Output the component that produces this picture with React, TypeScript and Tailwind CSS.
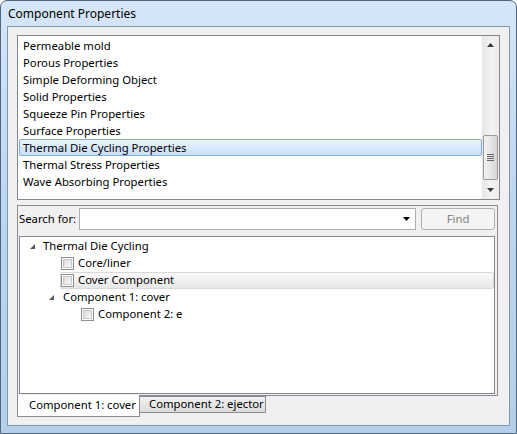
import React from "react";

function Checkbox() {
  return (
    <div className="w-[13px] h-[13px] border border-[#8e8f8f] bg-white p-[1px] shrink-0">
      <div className="w-full h-full border border-[#c6c8cc] bg-gradient-to-br from-[#dadde2] to-[#f7f7f7]" />
    </div>
  );
}

function TreeArrow() {
  return (
    <svg width="7" height="7" viewBox="0 0 7 7" className="shrink-0">
      <polygon points="6,1 6,6 1,6" fill="#575757" />
    </svg>
  );
}

export default function App() {
  const items = [
    "Permeable mold",
    "Porous Properties",
    "Simple Deforming Object",
    "Solid Properties",
    "Squeeze Pin Properties",
    "Surface Properties",
    "Thermal Die Cycling Properties",
    "Thermal Stress Properties",
    "Wave Absorbing Properties",
  ];
  return (
    <div className="w-[517px] h-[434px] font-['Noto_Sans',sans-serif] text-[11.3px] text-black bg-white">
      <div className="w-full h-full flex flex-col rounded-t-[7px] border border-[#4f6680] bg-gradient-to-b from-[#d5e6f7] via-[#bdd5ef] to-[#b5cfea] overflow-hidden">
        <div className="h-[25px] flex items-center pl-[7px] shrink-0 text-[12px]">Component Properties</div>
        <div className="flex-1 mx-[6px] mb-[7px] border border-[#8096ae] bg-[#f0f0f0] flex flex-col px-[9px] pt-[8px]">
          {/* top list */}
          <div className="h-[165px] border border-[#828790] bg-white flex shrink-0">
            <div className="flex-1 pt-[1px] flex flex-col">
              {items.map((it) => {
                const sel = it === "Thermal Die Cycling Properties";
                return (
                  <div
                    key={it}
                    className={
                      sel
                        ? "h-[17px] leading-[15px] ml-[1px] pl-[3px] border border-[#84acdd] rounded-[2px] bg-gradient-to-b from-[#eaf3fd] to-[#c7defb] whitespace-nowrap"
                        : "h-[17px] leading-[17px] pl-[5px] whitespace-nowrap"
                    }
                  >
                    {it}
                  </div>
                );
              })}
            </div>
            <div className="w-[17px] flex flex-col bg-gradient-to-r from-[#e6e6e6] via-[#f2f2f2] to-[#ececec]">
              <div className="h-[17px] flex items-center justify-center">
                <svg width="7" height="4" viewBox="0 0 7 4">
                  <polygon points="3.5,0 7,4 0,4" fill="#3a3a3a" />
                </svg>
              </div>
              <div className="h-[82px]" />
              <div className="h-[45px] mx-[1px] rounded-[2px] border border-[#9a9a9a] bg-gradient-to-r from-[#f3f3f3] to-[#d6d6d6] flex flex-col items-center justify-center gap-[1px]">
                <div className="w-[7px] h-[1px] bg-[#666]" />
                <div className="w-[7px] h-[1px] bg-[#666]" />
                <div className="w-[7px] h-[1px] bg-[#666]" />
                <div className="w-[7px] h-[1px] bg-[#666]" />
              </div>
              <div className="flex-1 flex items-center justify-center">
                <svg width="7" height="4" viewBox="0 0 7 4">
                  <polygon points="0,0 7,0 3.5,4" fill="#3a3a3a" />
                </svg>
              </div>
            </div>
          </div>

          {/* tab pane */}
          <div className="mt-[5px] w-[481px] h-[191px] border border-[#898c95] bg-[#f0f0f0] flex flex-col pt-[2px] pl-[1px] pr-[2px] pb-[1px] shrink-0">
            <div className="h-[22px] flex items-center shrink-0">
              <div className="w-[60px] whitespace-nowrap">Search for:</div>
              <div className="w-[337px] h-[22px] border border-[#abadb3] bg-white flex items-center justify-end pr-[5px]">
                <svg width="7" height="4" viewBox="0 0 7 4">
                  <polygon points="0,0 7,0 3.5,4" fill="#000" />
                </svg>
              </div>
              <div className="ml-[5px] w-[74px] h-[22px] rounded-[3px] border border-[#adb2b5] bg-[#f4f4f4] flex items-center justify-center text-[#838383]">
                Find
              </div>
            </div>
            <div className="mt-[6px] flex-1 border border-[#828790] bg-white pt-[1px] flex flex-col">
              <div className="h-[17px] flex items-center pl-[9px]">
                <TreeArrow />
                <span className="ml-[7px] whitespace-nowrap">Thermal Die Cycling</span>
              </div>
              <div className="h-[17px] flex items-center pl-[41px]">
                <Checkbox />
                <span className="ml-[4px] whitespace-nowrap">Core/liner</span>
              </div>
              <div className="h-[17px] flex items-center ml-[40px] border border-[#d9d9d9] rounded-[2px] bg-gradient-to-b from-[#fbfbfb] to-[#e7e7e7]">
                <Checkbox />
                <span className="ml-[4px] whitespace-nowrap">Cover Component</span>
              </div>
              <div className="h-[17px] flex items-center pl-[28px]">
                <TreeArrow />
                <span className="ml-[8px] whitespace-nowrap">Component 1: cover</span>
              </div>
              <div className="h-[17px] flex items-center pl-[61px]">
                <Checkbox />
                <span className="ml-[4px] whitespace-nowrap">Component 2: e</span>
              </div>
            </div>
          </div>

          {/* tabs */}
          <div className="flex -mt-[1px] relative z-10">
            <div className="shrink-0 w-[123px] h-[22px] bg-white border-x border-b border-[#898c95] pl-[11px] flex items-center whitespace-nowrap">
              Component 1: cover
            </div>
            <div className="shrink-0 mt-[1px] w-[126px] h-[17px] border border-l-0 border-[#898c95] bg-gradient-to-b from-[#f2f2f2] to-[#dcdcdc] pl-[9px] flex items-center whitespace-nowrap">
              Component 2: ejector
            </div>
          </div>
        </div>
      </div>
    </div>
  );
}
